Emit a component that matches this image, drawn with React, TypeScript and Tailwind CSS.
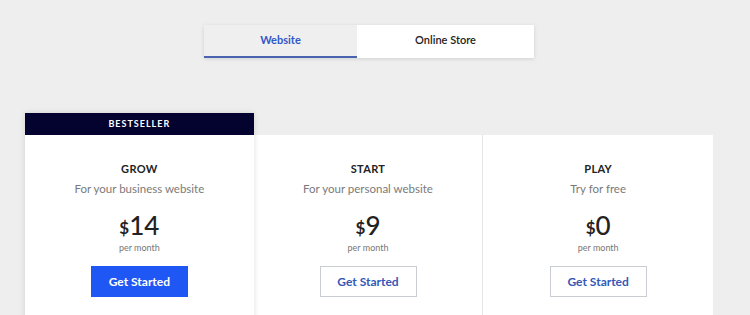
import React, { useState } from "react";

type Plan = {
  name: string;
  desc: string;
  price: string;
  featured?: boolean;
};

const plans: Plan[] = [
  { name: "GROW", desc: "For your business website", price: "14", featured: true },
  { name: "START", desc: "For your personal website", price: "9" },
  { name: "PLAY", desc: "Try for free", price: "0" },
];

const PlanCard = ({ plan, last }: { plan: Plan; last: boolean }) => {
  return (
    <div
      className={
        plan.featured
          ? "w-[229px] flex flex-col relative z-10 shadow-[0_0_6px_rgba(0,0,0,0.12)]"
          : "w-[230px] flex flex-col mt-[22px]" + (last ? "" : " border-r border-[#e6e6e6]")
      }
    >
      {plan.featured && (
        <div className="h-[22px] bg-[#040330] text-white text-[9px] font-bold tracking-[1px] flex items-center justify-center">
          BESTSELLER
        </div>
      )}
      <div className="bg-white h-[200px] flex flex-col items-center pt-[27px]">
        <div className="text-[11px] leading-[14px] font-bold text-[#222] tracking-[0.3px]">
          {plan.name}
        </div>
        <div className="mt-[6px] text-[11.5px] leading-[14px] text-[#7a7a7a]">
          {plan.desc}
        </div>
        <div className="mt-[15px] h-[28px] flex items-end text-[#222]">
          <span className="text-[17px] leading-[20px] font-bold mb-[1px]">$</span>
          <span className="text-[26px] leading-[28px] font-medium">{plan.price}</span>
        </div>
        <div className="mt-[3px] text-[9px] leading-[12px] text-[#777]">per month</div>
        <button
          className={
            plan.featured
              ? "mt-[12px] w-[97px] h-[31px] bg-[#1f57f4] text-white text-[12px] font-bold"
              : "mt-[12px] w-[97px] h-[31px] bg-white border border-[#c9cdd2] text-[#3457b8] text-[12px] font-bold"
          }
        >
          Get Started
        </button>
      </div>
    </div>
  );
};

const App = () => {
  const [tab, setTab] = useState("website");

  return (
    <div
      className="w-[750px] h-[315px] bg-[#eeeeee] overflow-hidden"
      style={{ fontFamily: "Lato, 'Liberation Sans', sans-serif" }}
    >
      <div className="w-[738px] flex flex-col items-center pt-[25px]">
        <div className="flex h-[33px] shadow-[0_1px_4px_rgba(0,0,0,0.12)]">
          <button
            onClick={() => setTab("website")}
            className={
              "w-[153px] h-full text-[11px] font-bold border-b-2 " +
              (tab === "website"
                ? "bg-[#efefef] text-[#3457c8] border-[#4a63b0]"
                : "bg-white text-[#222] border-transparent")
            }
          >
            Website
          </button>
          <button
            onClick={() => setTab("store")}
            className={
              "w-[177px] h-full text-[11px] font-semibold border-b-2 " +
              (tab === "store"
                ? "bg-[#efefef] text-[#3457c8] border-[#4a63b0]"
                : "bg-white text-[#222] border-transparent")
            }
          >
            Online Store
          </button>
        </div>

        <div className="mt-[55px] w-[688px] flex items-start">
          {plans.map((p, i) => (
            <PlanCard key={p.name} plan={p} last={i === plans.length - 1} />
          ))}
        </div>
      </div>
    </div>
  );
};

export default App;
